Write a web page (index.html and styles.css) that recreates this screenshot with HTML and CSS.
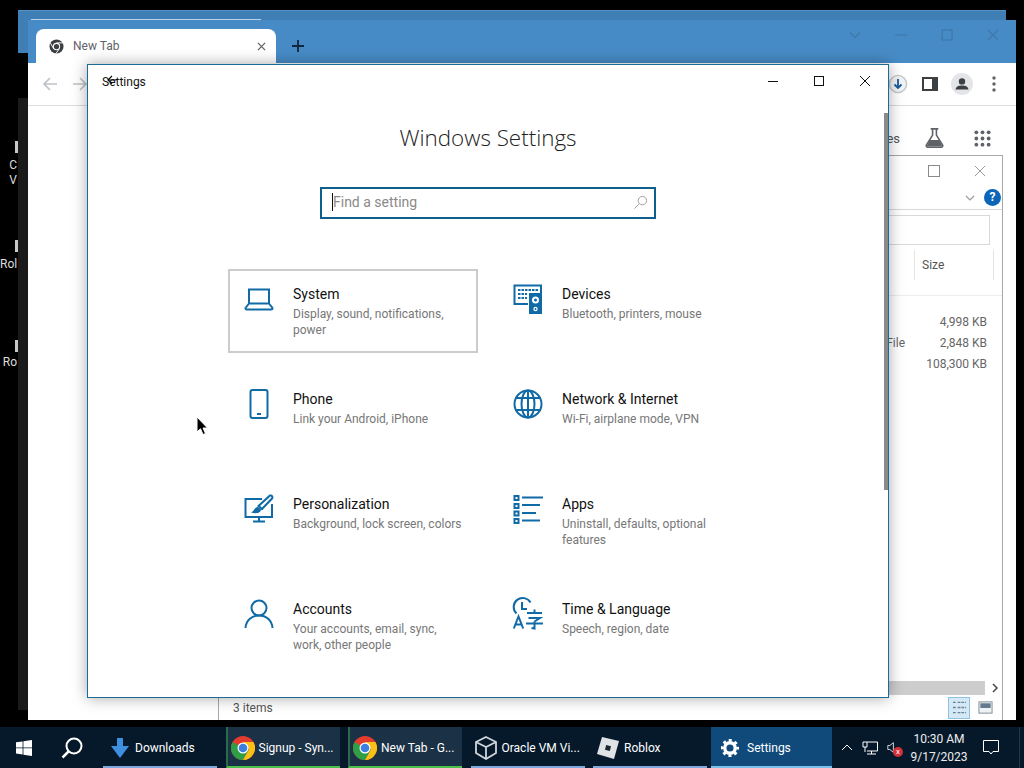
FILE: index.html
```html
<!DOCTYPE html>
<html lang="en">
<head>
  <meta charset="UTF-8"/>
  <title>Windows Settings</title>
  <link rel="stylesheet" href="styles.css">
</head>
<body>
  <div class="desktop">
    <!-- desktop shortcuts, cut off by the windows -->
    <div class="shortcut s1"><i></i><span>C<br>V</span></div>
    <div class="shortcut s2"><i></i><span>Rol</span></div>
    <div class="shortcut s3"><i></i><span>Ro</span></div>

    <div class="back-window"><div class="back-tab"></div></div>

    <!-- browser -->
    <div class="chrome">
      <div class="tabstrip">
        <div class="tab">
          <svg class="tab-logo" viewBox="0 0 16 16"><circle cx="8" cy="8" r="7.5" fill="#3c4043"/><circle cx="8" cy="8" r="3.9" fill="#fff"/><circle cx="8" cy="8" r="2.8" fill="#3c4043"/><path d="M8 4.1H15M5 10.5L1.6 4.5M11 10.5L7.3 15.6" stroke="#fff" stroke-width="1"/></svg>
          <span class="tab-title">New Tab</span>
          <svg class="tab-x" viewBox="0 0 10 10"><path d="M1 1L9 9M9 1L1 9" stroke="#5f6368" stroke-width="1.4"/></svg>
        </div>
        <svg class="plus" viewBox="0 0 12 12"><path d="M6 0V12M0 6H12" stroke="#10263a" stroke-width="1.8"/></svg>
        <div class="chrome-controls">
          <svg viewBox="0 0 12 12"><path d="M1 3.5L6 8.5L11 3.5" fill="none" stroke="#3f77a8" stroke-width="1.2"/></svg>
          <svg viewBox="0 0 12 12"><path d="M0 6H12" stroke="#3f77a8" stroke-width="1.2"/></svg>
          <svg viewBox="0 0 12 12"><rect x="1" y="1" width="10" height="10" fill="none" stroke="#3f77a8" stroke-width="1.2"/></svg>
          <svg viewBox="0 0 12 12"><path d="M1 1L11 11M11 1L1 11" stroke="#3f77a8" stroke-width="1.2"/></svg>
        </div>
      </div>
      <div class="toolbar">
        <svg class="nav-arrow" viewBox="0 0 16 16"><path d="M15 8H2M8 2L2 8L8 14" fill="none" stroke="#bdc1c6" stroke-width="1.7"/></svg>
        <svg class="nav-arrow" viewBox="0 0 16 16"><path d="M1 8H14M8 2L14 8L8 14" fill="none" stroke="#bdc1c6" stroke-width="1.7"/></svg>
        <div class="toolbar-right">
          <svg viewBox="0 0 20 20"><circle cx="10" cy="10" r="8.6" fill="#f1f3f4" stroke="#c4c7cc" stroke-width="1.4"/><path d="M10 5V14M6.5 10.5L10 14L13.5 10.5" fill="none" stroke="#1a5a9c" stroke-width="1.8"/></svg>
          <svg viewBox="0 0 20 20"><path d="M3 4H17V16H3Z" fill="none" stroke="#3c4043" stroke-width="2"/><rect x="12" y="4" width="5" height="12" fill="#3c4043"/></svg>
          <svg class="profile" viewBox="0 0 22 22"><circle cx="11" cy="11" r="11" fill="#e3e5e8"/><circle cx="11" cy="8.4" r="3.2" fill="#3c4043"/><path d="M4.5 16.5C5 13 8 12.4 11 12.4S17 13 17.5 16.5Z" fill="#3c4043"/></svg>
          <svg viewBox="0 0 20 20"><circle cx="10" cy="4" r="1.7" fill="#5f6368"/><circle cx="10" cy="10" r="1.7" fill="#5f6368"/><circle cx="10" cy="16" r="1.7" fill="#5f6368"/></svg>
        </div>
      </div>
      <div class="newtab-links">
        <span class="links-text">es</span>
        <svg class="flask" viewBox="0 0 22 22"><path d="M7 1.5H15M9 2V8L2.5 18.5C2 19.7 2.7 20.5 4 20.5H18C19.3 20.5 20 19.7 19.500 18.5L13 8V2" fill="none" stroke="#5f6368" stroke-width="1.7"/><path d="M6 13H16L19 19.500H3Z" fill="#5f6368"/></svg>
        <svg class="apps" viewBox="0 0 18 18"><g fill="#5f6368"><circle cx="2.500" cy="2.500" r="2"/><circle cx="9" cy="2.500" r="2"/><circle cx="15.500" cy="2.500" r="2"/><circle cx="2.500" cy="9" r="2"/><circle cx="9" cy="9" r="2"/><circle cx="15.500" cy="9" r="2"/><circle cx="2.500" cy="15.500" r="2"/><circle cx="9" cy="15.500" r="2"/><circle cx="15.500" cy="15.500" r="2"/></g></svg>
      </div>
    </div>

    <!-- file explorer behind the settings window -->
    <div class="explorer">
      <div class="ex-title">
        <svg viewBox="0 0 12 12"><rect x="0.500" y="0.500" width="11" height="11" fill="none" stroke="#8a8a8a"/></svg>
        <svg viewBox="0 0 14 14"><path d="M1 1L13 13M13 1L1 13" stroke="#8a8a8a" stroke-width="1"/></svg>
      </div>
      <div class="ex-ribbon">
        <svg class="ex-chev" viewBox="0 0 10 6"><path d="M1 1L5 5L9 1" fill="none" stroke="#9a9a9a" stroke-width="1.2"/></svg>
        <span class="help">?</span>
      </div>
      <div class="ex-address"><div class="ex-search"></div></div>
      <div class="ex-head"><span class="ex-size">Size</span></div>
      <div class="ex-rows">
        <div class="ex-row"><span>4,998 KB</span></div>
        <div class="ex-row"><em>File</em><span>2,848 KB</span></div>
        <div class="ex-row"><span>108,300 KB</span></div>
      </div>
      <div class="ex-scroll"><div class="ex-thumb"></div><svg viewBox="0 0 6 10"><path d="M1 1L5 5L1 9" fill="none" stroke="#444" stroke-width="1.500"/></svg></div>
      <div class="ex-status">
        <span>3 items</span>
        <div class="ex-views">
          <div class="view-btn on"><svg viewBox="0 0 16 16"><path d="M1 2.500H4M1 8H4M1 13.500H4M6 2.500H15M6 8H15M6 13.500H15" stroke="#6d8296" stroke-width="1.500" stroke-dasharray="3 1"/></svg></div>
          <div class="view-btn"><svg viewBox="0 0 16 16"><rect x="1" y="2" width="14" height="12" fill="#eef2f5" stroke="#7d8a96"/><rect x="2.500" y="3.500" width="11" height="5" fill="#62798e"/></svg></div>
        </div>
      </div>
    </div>

    <!-- settings -->
    <div class="settings">
      <div class="set-title">
        <span class="set-name">Settings</span>
        <svg class="set-back" viewBox="0 0 10 10"><path d="M9.500 5H1M5 1L1 5L5 9" fill="none" stroke="#111" stroke-width="1.200"/></svg>
        <div class="set-controls">
          <svg viewBox="0 0 12 12"><path d="M1 6.500H11" stroke="#111" stroke-width="1"/></svg>
          <svg viewBox="0 0 12 12"><rect x="1.500" y="1.500" width="9" height="9" fill="none" stroke="#111" stroke-width="1"/></svg>
          <svg viewBox="0 0 12 12"><path d="M1 1L11 11M11 1L1 11" stroke="#111" stroke-width="1"/></svg>
        </div>
      </div>
      <div class="set-scrollbar"></div>
      <h1>Windows Settings</h1>
      <div class="search">
        <span class="caret"></span>
        <span class="search-hint">Find a setting</span>
        <svg viewBox="0 0 16 16"><circle cx="10" cy="6" r="4.500" fill="none" stroke="#9a9a9a" stroke-width="1"/><path d="M6.800 9.200L1.500 14.500" stroke="#9a9a9a" stroke-width="1"/></svg>
      </div>
      <div class="grid">
        <div class="item selected">
          <svg class="icon" viewBox="0 0 30 30"><path d="M5 5.500H25V19.500H5ZM5 19.500L1.500 24C1.500 25 2 25.500 3 25.500H27C28 25.500 28.500 25 28.500 24L25 19.500" fill="none" stroke="#0f6aa5" stroke-width="2"/></svg>
          <div class="txt"><h3>System</h3><p>Display, sound, notifications, power</p></div>
        </div>
        <div class="item">
          <svg class="icon" viewBox="0 0 30 30"><path d="M15 20H1.500V1.500H28V9" fill="none" stroke="#0f6aa5" stroke-width="2"/><path d="M5 6H25M5 10H14M5 14H14" stroke="#0f6aa5" stroke-width="2" stroke-dasharray="2.500 1"/><rect x="16" y="9" width="13" height="21" fill="#0f6aa5"/><circle cx="22.500" cy="16" r="3.500" fill="#fff"/><circle cx="22.500" cy="16" r="1.500" fill="#0f6aa5"/><circle cx="22.500" cy="25" r="2.200" fill="#fff"/><circle cx="22.500" cy="25" r="1" fill="#0f6aa5"/></svg>
          <div class="txt"><h3>Devices</h3><p>Bluetooth, printers, mouse</p></div>
        </div>
        <div class="item">
          <svg class="icon" viewBox="0 0 30 30"><rect x="6.500" y="1" width="17" height="28" rx="2" fill="none" stroke="#0f6aa5" stroke-width="2"/><path d="M13 25H17" stroke="#0f6aa5" stroke-width="2"/></svg>
          <div class="txt"><h3>Phone</h3><p>Link your Android, iPhone</p></div>
        </div>
        <div class="item">
          <svg class="icon" viewBox="0 0 30 30"><g fill="none" stroke="#0f6aa5" stroke-width="2"><circle cx="15" cy="15" r="13.500"/><ellipse cx="15" cy="15" rx="6.500" ry="13.500"/><path d="M3 9H27M3 21H27M15 1.500V28.500"/></g></svg>
          <div class="txt"><h3>Network &amp; Internet</h3><p>Wi-Fi, airplane mode, VPN</p></div>
        </div>
        <div class="item">
          <svg class="icon" viewBox="0 0 30 30"><path d="M18 5H1.500V23H28V10" fill="none" stroke="#0f6aa5" stroke-width="2"/><path d="M15 23V27M9 27.500H21" stroke="#0f6aa5" stroke-width="2"/><path d="M26 1.500C28 1 29 3 28 4.500L18 15L14.500 12Z" fill="none" stroke="#0f6aa5" stroke-width="2"/><path d="M14 13C10 13 11 17 7 18.500C12 20 17 19 17 15.500Z" fill="#0f6aa5"/></svg>
          <div class="txt"><h3>Personalization</h3><p>Background, lock screen, colors</p></div>
        </div>
        <div class="item">
          <svg class="icon" viewBox="0 0 30 30"><g fill="none" stroke="#0f6aa5" stroke-width="2"><rect x="1.500" y="2" width="4" height="4"/><rect x="1.500" y="10" width="4" height="4"/><rect x="1.500" y="17.500" width="4" height="4"/><rect x="1.500" y="25" width="4" height="4"/><path d="M9 3.500H30M9 11H27M9 19H23M9 26.500H27"/></g></svg>
          <div class="txt"><h3>Apps</h3><p>Uninstall, defaults, optional features</p></div>
        </div>
        <div class="item">
          <svg class="icon" viewBox="0 0 30 30"><g fill="none" stroke="#0f6aa5" stroke-width="2"><circle cx="15" cy="9" r="7.500"/><path d="M1.500 29C2 21 8 16.500 15 16.500S28 21 28.500 29"/></g></svg>
          <div class="txt"><h3>Accounts</h3><p>Your accounts, email, sync, work, other people</p></div>
        </div>
        <div class="item">
          <svg class="icon" viewBox="0 0 30 30"><g fill="none" stroke="#0f6aa5" stroke-width="2"><path d="M3.500 14.500A9 9 0 1 1 17.500 3.500"/><path d="M9 3V10H14"/><path d="M0.800 29.500L5.500 17.500L10.200 29.500M2.500 25.500H8.500"/><path d="M14 14H29M21.500 10.500V14M15.500 19H27L21.500 22.500M13 24.500H30M21.500 22.500V29.500L18.500 29"/></g></svg>
          <div class="txt"><h3>Time &amp; Language</h3><p>Speech, region, date</p></div>
        </div>
      </div>
    </div>

    <svg class="cursor" viewBox="0 0 12 20"><path d="M1 1V16L4.500 12.800L7 18.500L9.500 17.500L7 12H11.500Z" fill="#000" stroke="#fff" stroke-width="1"/></svg>

    <!-- taskbar -->
    <div class="taskbar">
      <div class="start">
        <svg viewBox="0 0 16 16"><path d="M0 2.300L6.600 1.400V7.500H0ZM7.400 1.300L16 0V7.500H7.400ZM0 8.300H6.600V14.500L0 13.600ZM7.400 8.300H16V16L7.400 14.700Z" fill="#fff"/></svg>
      </div>
      <div class="find">
        <svg viewBox="0 0 22 22"><circle cx="13" cy="9" r="7.500" fill="none" stroke="#fff" stroke-width="2"/><path d="M7.500 14.500L1.500 20.500" stroke="#fff" stroke-width="2.500"/></svg>
      </div>
      <div class="task">
        <svg viewBox="0 0 20 20"><path d="M7 0H13V8H19L10 20L1 8H7Z" fill="#3f8fe0"/></svg>
        <span>Downloads</span>
      </div>
      <div class="task running">
        <svg class="ch" viewBox="0 0 24 24"><circle cx="12" cy="12" r="12" fill="#e33b2e"/><path d="M12 12L1.600 6A12 12 0 0 0 12 24L18 13.600Z" fill="#2f9e44"/><path d="M12 6H22.400A12 12 0 0 1 12 24L18 13.600Z" fill="#f9c116"/><circle cx="12" cy="12" r="5.500" fill="#fff"/><circle cx="12" cy="12" r="4.300" fill="#3d7fe0"/></svg>
        <span>Signup - Syn...</span>
      </div>
      <div class="task running">
        <svg class="ch" viewBox="0 0 24 24"><circle cx="12" cy="12" r="12" fill="#e33b2e"/><path d="M12 12L1.600 6A12 12 0 0 0 12 24L18 13.600Z" fill="#2f9e44"/><path d="M12 6H22.400A12 12 0 0 1 12 24L18 13.600Z" fill="#f9c116"/><circle cx="12" cy="12" r="5.500" fill="#fff"/><circle cx="12" cy="12" r="4.300" fill="#3d7fe0"/></svg>
        <span>New Tab - G...</span>
      </div>
      <div class="task">
        <svg class="ch" viewBox="0 0 24 24"><path d="M12 1L22 6V17L12 23L2 17V6ZM2 6L12 11L22 6M12 11V23" fill="none" stroke="#cfd6dc" stroke-width="1.800"/></svg>
        <span>Oracle VM Vi...</span>
      </div>
      <div class="task">
        <svg class="ch" viewBox="0 0 24 24"><path d="M6 1L23 5L18 23L1 18Z" fill="#dfe3e6"/><rect x="9.500" y="9.500" width="5" height="5" transform="rotate(14 12 12)" fill="#1c2630"/></svg>
        <span>Roblox</span>
      </div>
      <div class="task active">
        <svg class="gear" viewBox="0 0 24 24"><circle cx="12" cy="12" r="7" fill="none" stroke="#fff" stroke-width="4.500"/><circle cx="12" cy="12" r="10.300" fill="none" stroke="#fff" stroke-width="3.500" stroke-dasharray="4 4.090" stroke-dashoffset="2"/></svg>
        <span>Settings</span>
      </div>
      <div class="tray">
        <svg class="t-up" viewBox="0 0 12 7"><path d="M1 6L6 1L11 6" fill="none" stroke="#fff" stroke-width="1"/></svg>
        <svg class="t-net" viewBox="0 0 16 14"><path d="M5 1H15.500V10H5M1 1H5V6H1ZM3 6V11M9.500 10V13M5 13H14" fill="none" stroke="#fff" stroke-width="1"/></svg>
        <div class="t-vol">
          <svg viewBox="0 0 10 14"><path d="M1 4.500H3.500L8 1V13L3.500 9.500H1Z" fill="none" stroke="#fff" stroke-width="1"/></svg>
          <i>x</i>
        </div>
        <div class="clock"><span>10:30 AM</span><span>9/17/2023</span></div>
        <svg class="t-note" viewBox="0 0 16 15"><path d="M0.500 0.500H15.500V11.500H10L8 14L6 11.500H0.500Z" fill="none" stroke="#fff" stroke-width="1"/></svg>
      </div>
    </div>
  </div>
</body>
</html>
```

FILE: styles.css
```css
* { box-sizing: border-box; }
html, body { margin: 0; height: 100%; background: #000; overflow: hidden; }
body { font-family: Roboto, "Noto Sans", sans-serif; color: #000; }
svg { display: block; }

.desktop { position: relative; width: 1024px; height: 768px; overflow: hidden; background: #000; }

.shortcut { position: absolute; left: 0; width: 18px; overflow: hidden; color: #ddd; font-size: 12px; line-height: 15px; text-align: right; }
.shortcut i { display: block; width: 3px; height: 12px; background: #c8c8c8; margin-left: 15px; margin-bottom: 5px; }
.shortcut span { display: block; white-space: nowrap; padding-right: 1px; }
.s1 { top: 141px; }
.s2 { top: 240px; }
.s3 { top: 340px; }
.s3 span { margin-top: -2px; }

.back-window { position: absolute; left: 18px; top: 10px; width: 988px; height: 700px; background: linear-gradient(#3f7fb5 0, #3f7fb5 42px, #000 42px, #000 87px, #1a1a1a 87px); border-top: 1px solid #5792c4; }
.back-tab { position: absolute; left: 13px; top: 8px; width: 230px; height: 1px; background: #b9d3ea; }

/* browser */
.chrome { position: absolute; left: 28px; top: 20px; width: 988px; height: 700px; background: #fff; display: flex; flex-direction: column; }
.tabstrip { height: 43px; background: #478bc6; display: flex; align-items: flex-end; padding-left: 8px; position: relative; }
.tab { width: 240px; height: 34px; background: #fff; border-radius: 8px 8px 0 0; display: flex; align-items: center; padding: 0 10px 0 13px; }
.tab-logo { width: 15px; height: 15px; }
.tab-title { font-size: 12px; color: #5f6368; margin-left: 9px; flex: 1; }
.tab-x { width: 9px; height: 9px; }
.plus { width: 12px; height: 12px; margin: 0 0 11px 16px; }
.chrome-controls { position: absolute; right: 17px; top: 9px; display: flex; gap: 34px; }
.chrome-controls svg { width: 12px; height: 12px; }
.toolbar { height: 43px; border-bottom: 1px solid #dadce0; display: flex; align-items: center; padding-left: 14px; gap: 14px; }
.nav-arrow { width: 16px; height: 16px; }
.toolbar-right { margin-left: auto; display: flex; align-items: center; padding-right: 6px; }
.toolbar-right svg { width: 20px; height: 20px; margin: 0 6px; }
.toolbar-right .profile { width: 22px; height: 22px; margin: 0 5px; }
.newtab-links { position: absolute; right: 25px; top: 107px; display: flex; align-items: center; color: #555; font-size: 13px; }
.links-text { margin-right: 24px; }
.flask { width: 21px; height: 22px; margin-right: 29px; }
.apps { width: 17px; height: 17px; }

/* explorer */
.explorer { position: absolute; left: 218px; top: 155px; width: 785px; height: 565px; background: #fff; border: 1px solid #a8a8a8; border-bottom: 0; display: flex; flex-direction: column; font-size: 12px; color: #666; }
.ex-title { height: 30px; display: flex; justify-content: flex-end; align-items: center; gap: 34px; padding-right: 16px; }
.ex-title svg { width: 12px; height: 12px; }
.ex-ribbon { height: 24px; display: flex; justify-content: flex-end; align-items: center; gap: 9px; padding-right: 1px; border-bottom: 1px solid #d8d8d8; }
.ex-chev { width: 10px; height: 6px; }
.help { width: 17px; height: 17px; border-radius: 50%; background: #0b66b8; color: #fff; font-size: 12px; font-weight: 700; text-align: center; line-height: 17px; }
.ex-address { height: 40px; padding: 5px 12px 0 0; }
.ex-search { height: 30px; border: 1px solid #d9d9d9; }
.ex-head { height: 46px; border-bottom: 1px solid #eee; display: flex; justify-content: flex-end; padding-right: 8px; }
.ex-size { width: 80px; height: 30px; line-height: 30px; padding-left: 7px; border-left: 1px solid #e5e5e5; border-right: 1px solid #e5e5e5; color: #555; }
.ex-rows { flex: 1; padding: 16px 15px 0 0; }
.ex-row { height: 21px; line-height: 21px; text-align: right; position: relative; color: #666; }
.ex-row em { position: absolute; right: 82px; font-style: normal; }
.ex-scroll { height: 14px; display: flex; align-items: center; margin-bottom: 2px; padding-right: 4px; }
.ex-thumb { flex: 1; height: 14px; background: #cdcdcd; margin-right: 7px; }
.ex-scroll svg { width: 6px; height: 10px; }
.ex-status { height: 21px; margin-bottom: 2px; display: flex; align-items: center; justify-content: space-between; padding: 0 6px 0 14px; color: #555; }
.ex-views { display: flex; gap: 4px; }
.view-btn { width: 22px; height: 22px; display: flex; align-items: center; justify-content: center; }
.view-btn.on { background: #d4e8f6; border: 1px solid #8fc3e4; }
.view-btn svg { width: 15px; height: 15px; }

/* settings */
.settings { position: absolute; left: 87px; top: 64px; width: 802px; height: 634px; background: #fff; border: 1px solid #1b6a98; box-shadow: 0 0 14px rgba(0,0,0,.35); }
.set-title { height: 33px; position: relative; display: flex; align-items: center; padding-left: 14px; }
.set-name { font-size: 12px; color: #111; }
.set-back { position: absolute; left: 19px; top: 10px; width: 10px; height: 10px; }
.set-controls { position: absolute; right: 17px; top: 10px; display: flex; gap: 34px; }
.set-controls svg { width: 12px; height: 12px; }
.set-scrollbar { position: absolute; right: 0; top: 48px; width: 4px; height: 377px; background: #8a8a8a; }
.settings h1 { margin: 22px 0 0; font-size: 22.4px; font-weight: 300; line-height: 36px; text-align: center; font-family: "Open Sans", "Noto Sans", sans-serif; color: #222; }
.search { width: 336px; height: 32px; margin: 31px auto 0; border: 2px solid #0f5f8c; display: flex; align-items: center; padding: 0 6px 2px 10px; position: relative; }
.caret { width: 1px; height: 18px; background: #111; }
.search-hint { flex: 1; font-size: 14px; color: #8a8a8a; }
.search svg { width: 15px; height: 15px; }
.grid { width: 519px; margin: 50px 0 0 140px; display: grid; grid-template-columns: 250px 250px; column-gap: 19px; row-gap: 21px; }
.item { height: 84px; padding: 15px 16px; display: flex; align-items: flex-start; gap: 19px; }
.item.selected { border: 2px solid #ccc; padding: 13px 14px; }
.icon { width: 30px; height: 30px; flex: none; overflow: visible; }
.txt h3 { margin: 0; font-size: 14px; font-weight: 400; line-height: 20px; color: #111; }
.txt p { margin: 2px 0 0; font-size: 12px; line-height: 16px; color: #777; }

.cursor { position: absolute; left: 196px; top: 416px; width: 12px; height: 20px; }

/* taskbar */
.taskbar { position: absolute; left: 0; right: 0; bottom: 0; height: 41px; background: #06192b; display: flex; color: #fff; font-size: 12px; }
.start { width: 48px; display: flex; align-items: center; justify-content: center; }
.start svg { width: 16px; height: 16px; }
.find { width: 48px; margin-right: 7px; display: flex; align-items: center; justify-content: center; }
.find svg { width: 22px; height: 22px; }
.task { width: 114px; margin-left: 8.5px; display: flex; align-items: center; gap: 4px; padding: 2px 0 0 3px; border-bottom: 2px solid #7fa8dd; white-space: nowrap; overflow: hidden; }
.find + .task { margin-left: 0; padding-left: 7px; gap: 5px; }
.task svg { width: 20px; height: 20px; flex: none; }
.task svg.ch { width: 24px; height: 24px; }
.running { background: #1b3146; border-bottom-color: #4cc04c; border-left: 2px solid #2c6a4c; }
.active { width: 121px; margin-left: 4px; background: #0f4a7a; border-bottom-color: #7cc0ec; padding-left: 10px; gap: 8px; }
.task .gear { width: 18px; height: 18px; }
.tray { flex: 1; display: flex; align-items: center; padding-left: 9px; position: relative; }
.tray::after { content: ""; position: absolute; right: 4px; top: 0; bottom: 0; width: 1px; background: #1c3a55; }
.t-up { width: 12px; height: 7px; margin-right: 9px; }
.t-net { width: 16px; height: 14px; margin-right: 9px; }
.t-vol { width: 16px; position: relative; }
.t-vol svg { width: 8px; height: 13px; }
.t-vol i { position: absolute; left: 6px; top: 6px; width: 10px; height: 10px; border-radius: 50%; background: #d3303a; font-size: 8px; line-height: 9px; text-align: center; font-style: normal; }
.clock { width: 72px; display: flex; flex-direction: column; align-items: center; line-height: 18px; color: #eee; }
.t-note { width: 16px; height: 15px; margin-left: 8px; }
```
